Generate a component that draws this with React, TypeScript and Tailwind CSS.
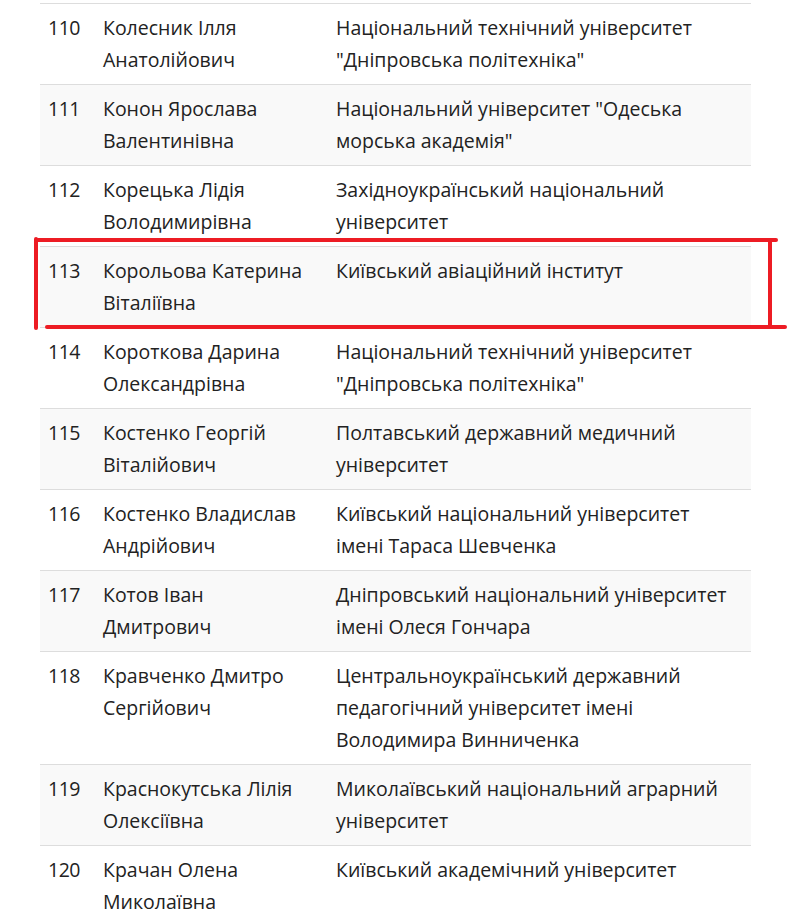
const rows: { n: string; name: string[]; uni: string[] }[] = [
  { n: "110", name: ["Колесник Ілля", "Анатолійович"], uni: ["Національний технічний університет", "\"Дніпровська політехніка\""] },
  { n: "111", name: ["Конон Ярослава", "Валентинівна"], uni: ["Національний університет \"Одеська", "морська академія\""] },
  { n: "112", name: ["Корецька Лідія", "Володимирівна"], uni: ["Західноукраїнський національний", "університет"] },
  { n: "113", name: ["Корольова Катерина", "Віталіївна"], uni: ["Київський авіаційний інститут"] },
  { n: "114", name: ["Короткова Дарина", "Олександрівна"], uni: ["Національний технічний університет", "\"Дніпровська політехніка\""] },
  { n: "115", name: ["Костенко Георгій", "Віталійович"], uni: ["Полтавський державний медичний", "університет"] },
  { n: "116", name: ["Костенко Владислав", "Андрійович"], uni: ["Київський національний університет", "імені Тараса Шевченка"] },
  { n: "117", name: ["Котов Іван", "Дмитрович"], uni: ["Дніпровський національний університет", "імені Олеся Гончара"] },
  { n: "118", name: ["Кравченко Дмитро", "Сергійович"], uni: ["Центральноукраїнський державний", "педагогічний університет імені", "Володимира Винниченка"] },
  { n: "119", name: ["Краснокутська Лілія", "Олексіївна"], uni: ["Миколаївський національний аграрний", "університет"] },
  { n: "120", name: ["Крачан Олена", "Миколаївна"], uni: ["Київський академічний університет"] },
];

const Lines = ({ lines }: { lines: string[] }) => (
  <>
    {lines.map((l, i) => (
      <div key={i} className="whitespace-nowrap">
        {l}
      </div>
    ))}
  </>
);

export default function App() {
  return (
    <div className="relative min-h-[921px] bg-white font-['Open_Sans',sans-serif] text-[19.5px] leading-[32px] text-[#222]">
      <div className="pt-[3px] pl-[40px]">
        <div className="w-[711px] border-t border-[#dddddd]">
          {rows.map((r, i) => (
            <div
              key={r.n}
              className={`flex border-b border-[#dddddd] py-2 ${i % 2 === 1 ? "bg-[#f9f9f9]" : "bg-white"}`}
            >
              <div className="w-[55px] shrink-0 pl-2 tracking-[-0.5px]">{r.n}</div>
              <div className="w-[233px] shrink-0 pl-2">
                <Lines lines={r.name} />
              </div>
              <div className="flex-1 pl-2">
                <Lines lines={r.uni} />
              </div>
            </div>
          ))}
        </div>
      </div>

      {/* red highlight around row 113 */}
      <div className="absolute left-[34px] top-[237px] h-[93px] w-[4px] rounded-full bg-[#ed1c24]" />
      <div className="absolute left-[36px] top-[238px] h-[4px] w-[742px] rounded-full bg-[#ed1c24]" />
      <div className="absolute left-[768px] top-[240px] h-[86px] w-[4px] bg-[#ed1c24]" />
      <div className="absolute left-[45px] top-[325px] h-[4px] w-[742px] rounded-full bg-[#ed1c24]" />
    </div>
  );
}
